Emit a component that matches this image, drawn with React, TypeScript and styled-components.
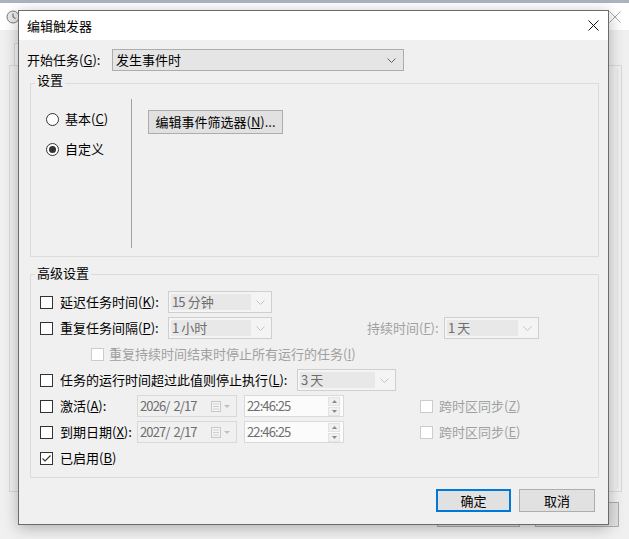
import styled, { createGlobalStyle } from 'styled-components';

const GlobalStyle = createGlobalStyle`
  html, body { margin: 0; padding: 0; }
  body {
    font-family: "Noto Sans CJK SC", "Noto Sans", sans-serif;
    font-size: 13px;
    color: #000;
    background: #f0f0f0;
  }
  * { box-sizing: border-box; }
`;

const Desktop = styled.div`
  position: relative;
  width: 629px;
  height: 539px;
  overflow: hidden;
  display: flex;
  flex-direction: column;
  background: #f0f0f0;
`;

const TopStrip = styled.div`
  height: 3px;
  background: #aab4be;
`;

const BackTitle = styled.div`
  height: 27px;
  background: #fff;
  display: flex;
  align-items: center;
  justify-content: space-between;
  padding: 0 8px 0 6px;
`;

const BackBody = styled.div`
  flex: 1;
  display: flex;
  flex-direction: column;
  padding: 13px 7px 0 9px;
`;

const BackTab = styled.div`
  width: 60px;
  height: 22px;
  margin-left: 5px;
  border: 1px solid #d9d9d9;
  border-bottom: none;
  background: #f7f7f7;
`;

const BackPanel = styled.div`
  height: 427px;
  border: 1px solid #d9d9d9;
  padding: 3px 3px 3px 0;
`;

const BackPanelInner = styled.div`
  height: 100%;
  border-right: 1px solid #e2e2e2;
`;

const BackButtons = styled.div`
  display: flex;
  justify-content: flex-end;
  gap: 15px;
  margin-top: 10px;
  padding-right: 3px;
`;

const BackButton = styled.div<{ $w: number }>`
  width: ${(p) => p.$w}px;
  height: 25px;
  background: #e1e1e1;
  border: 1px solid #adadad;
`;

const Dialog = styled.div`
  position: absolute;
  left: 18px;
  top: 10px;
  width: 591px;
  height: 515px;
  border: 1px solid #6b6b6b;
  background: #f0f0f0;
  box-shadow: 0 3px 14px rgba(0, 0, 0, 0.28);
  display: flex;
  flex-direction: column;
`;

const TitleBar = styled.div`
  height: 29px;
  background: #fff;
  display: flex;
  align-items: center;
  justify-content: space-between;
  padding-left: 8px;
  line-height: 16px;
`;

const CloseBtn = styled.div`
  width: 30px;
  height: 29px;
  display: flex;
  align-items: center;
  justify-content: center;
`;

const Body = styled.div`
  flex: 1;
  display: flex;
  flex-direction: column;
  padding: 9px 13px 0 8px;
  line-height: 16px;
`;

const StartRow = styled.div`
  display: flex;
  align-items: center;
  height: 22px;
`;

const StartLabel = styled.span`
  width: 85px;
`;

const Select = styled.div`
  width: 292px;
  height: 22px;
  background: #e5e5e5;
  border: 1px solid #adadad;
  display: flex;
  align-items: center;
  justify-content: space-between;
  padding: 0 7px 0 3px;
`;

const Group = styled.fieldset<{ $mt: number; $pt: number; $pb: number }>`
  margin: ${(p) => p.$mt}px 0 0 3px;
  width: 569px;
  min-width: 0;
  border: 1px solid #dcdcdc;
  padding: ${(p) => p.$pt}px 0 ${(p) => p.$pb}px 0;
`;

const Legend = styled.legend<{ $pb: number }>`
  margin-left: 4px;
  padding: 0 2px ${(p) => p.$pb}px;
  line-height: 16px;
`;

const SettingsInner = styled.div`
  display: flex;
  height: 149px;
`;

const RadioCol = styled.div`
  width: 101px;
  border-right: 1px solid #a0a0a0;
  display: flex;
  flex-direction: column;
  gap: 10px;
  padding: 10px 0 0 15px;
`;

const RadioRow = styled.label`
  display: flex;
  align-items: center;
  gap: 6px;
  height: 20px;
`;

const Radio = styled.span<{ $on?: boolean }>`
  width: 13px;
  height: 13px;
  border-radius: 50%;
  border: 1px solid #333;
  background: #fff;
  display: flex;
  align-items: center;
  justify-content: center;
  &::after {
    content: '';
    width: 7px;
    height: 7px;
    border-radius: 50%;
    background: ${(p) => (p.$on ? '#333' : 'transparent')};
  }
`;

const FilterCol = styled.div`
  padding: 11px 0 0 16px;
`;

const Button = styled.button<{ $w: number; $h: number; $def?: boolean }>`
  width: ${(p) => p.$w}px;
  height: ${(p) => p.$h}px;
  background: #e1e1e1;
  border: ${(p) => (p.$def ? '2px solid #0078d7' : '1px solid #adadad')};
  font: inherit;
  line-height: 16px;
  color: #000;
  padding: 0;
`;

const Rows = styled.div`
  display: flex;
  flex-direction: column;
  gap: 4px;
  padding-left: 9px;
`;

const Row = styled.div<{ $indent?: number }>`
  display: flex;
  align-items: center;
  height: 22px;
  padding-left: ${(p) => p.$indent ?? 0}px;
`;

const Check = styled.span<{ $disabled?: boolean; $gap?: number }>`
  width: 13px;
  height: 13px;
  flex: none;
  border: 1px solid ${(p) => (p.$disabled ? '#cccccc' : '#333')};
  background: #fff;
  margin-right: ${(p) => p.$gap ?? 7}px;
  display: flex;
  align-items: center;
  justify-content: center;
`;

const Label = styled.span<{ $w?: number; $ml?: number; $dim?: boolean }>`
  ${(p) => (p.$w ? `width: ${p.$w}px; flex: none;` : '')}
  margin-left: ${(p) => p.$ml ?? 0}px;
  color: ${(p) => (p.$dim ? '#a0a0a0' : '#000')};
  white-space: nowrap;
`;

const Num = styled.span`
  letter-spacing: -0.9px;
  white-space: pre;
`;

const Combo = styled.div<{ $w: number }>`
  width: ${(p) => p.$w}px;
  height: 22px;
  border: 1px solid #cfcfcf;
  background: #f4f4f4;
  padding: 2px;
  display: flex;
  align-items: stretch;
`;

const ComboText = styled.span`
  flex: 1;
  background: #e8e8e8;
  color: #6d6d6d;
  padding-left: 1px;
  display: flex;
  align-items: center;
  gap: 3px;
`;

const ComboArrow = styled.span`
  width: 18px;
  display: flex;
  align-items: center;
  justify-content: center;
`;

const DateBox = styled.div`
  width: 100px;
  height: 22px;
  border: 1px solid #d9d9d9;
  background: #f0f0f0;
  color: #6d6d6d;
  display: flex;
  align-items: center;
  padding-left: 2px;
  margin-right: 7px;
`;

const DateIcon = styled.span`
  margin-left: auto;
  display: flex;
  align-items: center;
  gap: 3px;
  padding-right: 6px;
`;

const TimeBox = styled.div`
  width: 100px;
  height: 22px;
  border: 1px solid #d9d9d9;
  background: #fbfbfb;
  color: #6d6d6d;
  display: flex;
  align-items: center;
  padding: 0 3px 0 2px;
  margin-right: 76px;
`;

const Spin = styled.span`
  margin-left: auto;
  width: 12px;
  height: 19px;
  display: flex;
  flex-direction: column;
  gap: 1px;
`;

const SpinHalf = styled.span`
  flex: 1;
  background: #f0f0f0;
  border: 1px solid #e3e3e3;
  display: flex;
  align-items: center;
  justify-content: center;
`;

const Footer = styled.div`
  display: flex;
  justify-content: flex-end;
  gap: 8px;
  margin-top: 11px;
`;

const Mn = styled.u`
  text-underline-offset: 1px;
`;

const Chevron = ({ color = '#606060' }: { color?: string }) => (
  <svg width="9" height="5" viewBox="0 0 9 5">
    <polyline points="0.5,0.5 4.5,4.5 8.5,0.5" fill="none" stroke={color} strokeWidth="1" />
  </svg>
);

const Tick = () => (
  <svg width="11" height="11" viewBox="0 0 11 11">
    <polyline points="1.5,5.5 4,8 9.5,2.5" fill="none" stroke="#333" strokeWidth="1.1" />
  </svg>
);

const Triangle = ({ up }: { up?: boolean }) => (
  <svg width="5" height="3" viewBox="0 0 5 3">
    <polygon points={up ? '0,3 2.5,0 5,3' : '0,0 2.5,3 5,0'} fill="#8a8a8a" />
  </svg>
);

const ComboBox = ({ w, num, unit }: { w: number; num: string; unit: string }) => (
  <Combo $w={w}>
    <ComboText>
      <Num>{num}</Num>
      <span>{unit}</span>
    </ComboText>
    <ComboArrow>
      <Chevron color="#c4c4c4" />
    </ComboArrow>
  </Combo>
);

const DateField = ({ value }: { value: string }) => (
  <DateBox>
    <Num>{value}</Num>
    <DateIcon>
      <svg width="10" height="11" viewBox="0 0 10 11">
        <rect x="0.5" y="0.5" width="9" height="10" fill="#f4f4f4" stroke="#c8c8c8" />
        <line x1="2" y1="3" x2="8" y2="3" stroke="#d0d0d0" />
        <line x1="2" y1="5.5" x2="8" y2="5.5" stroke="#d0d0d0" />
        <line x1="2" y1="8" x2="8" y2="8" stroke="#d0d0d0" />
      </svg>
      <svg width="6" height="3" viewBox="0 0 6 3">
        <polygon points="0,0 3,3 6,0" fill="#c0c0c0" />
      </svg>
    </DateIcon>
  </DateBox>
);

const TimeField = ({ value }: { value: string }) => (
  <TimeBox>
    <Num>{value}</Num>
    <Spin>
      <SpinHalf>
        <Triangle up />
      </SpinHalf>
      <SpinHalf>
        <Triangle />
      </SpinHalf>
    </Spin>
  </TimeBox>
);

export default function App() {
  return (
    <Desktop>
      <GlobalStyle />
      <TopStrip />
      <BackTitle>
        <svg width="14" height="14" viewBox="0 0 14 14">
          <circle cx="7" cy="7" r="6" fill="#e8e8e8" stroke="#7a7a7a" />
          <polyline points="7,3.5 7,7 9.5,8.5" fill="none" stroke="#5a5a5a" />
        </svg>
        <svg width="12" height="12" viewBox="0 0 12 12">
          <path d="M0.5 0.5 L11.5 11.5 M11.5 0.5 L0.5 11.5" stroke="#a8a8a8" strokeWidth="1" />
        </svg>
      </BackTitle>
      <BackBody>
        <BackTab />
        <BackPanel>
          <BackPanelInner />
        </BackPanel>
        <BackButtons>
          <BackButton $w={83} />
          <BackButton $w={84} />
        </BackButtons>
      </BackBody>

      <Dialog>
        <TitleBar>
          <span>编辑触发器</span>
          <CloseBtn>
            <svg width="11" height="11" viewBox="0 0 11 11">
              <path d="M0.5 0.5 L10.5 10.5 M10.5 0.5 L0.5 10.5" stroke="#111" strokeWidth="1" />
            </svg>
          </CloseBtn>
        </TitleBar>
        <Body>
          <StartRow>
            <StartLabel>
              开始任务(<Mn>G</Mn>):
            </StartLabel>
            <Select>
              <span>发生事件时</span>
              <Chevron />
            </Select>
          </StartRow>

          <Group $mt={1} $pt={5} $pb={8}>
            <Legend $pb={6}>设置</Legend>
            <SettingsInner>
              <RadioCol>
                <RadioRow>
                  <Radio />
                  <span>
                    基本(<Mn>C</Mn>)
                  </span>
                </RadioRow>
                <RadioRow>
                  <Radio $on />
                  <span>自定义</span>
                </RadioRow>
              </RadioCol>
              <FilterCol>
                <Button $w={135} $h={24}>
                  编辑事件筛选器(<Mn>N</Mn>)...
                </Button>
              </FilterCol>
            </SettingsInner>
          </Group>

          <Group $mt={8} $pt={8} $pb={8}>
            <Legend $pb={2}>高级设置</Legend>
            <Rows>
              <Row>
                <Check />
                <Label $w={108}>
                  延迟任务时间(<Mn>K</Mn>):
                </Label>
                <ComboBox w={104} num="15" unit="分钟" />
              </Row>
              <Row>
                <Check />
                <Label $w={108}>
                  重复任务间隔(<Mn>P</Mn>):
                </Label>
                <ComboBox w={104} num="1" unit="小时" />
                <Label $w={77} $ml={95} $dim>
                  持续时间(<Mn>F</Mn>):
                </Label>
                <ComboBox w={95} num="1" unit="天" />
              </Row>
              <Row $indent={51}>
                <Check $disabled $gap={5} />
                <Label $dim>
                  重复持续时间结束时停止所有运行的任务(<Mn>I</Mn>)
                </Label>
              </Row>
              <Row>
                <Check />
                <Label $w={237}>
                  任务的运行时间超过此值则停止执行(<Mn>L</Mn>):
                </Label>
                <ComboBox w={99} num="3" unit="天" />
              </Row>
              <Row>
                <Check />
                <Label $w={77}>
                  激活(<Mn>A</Mn>):
                </Label>
                <DateField value="2026/  2/17" />
                <TimeField value="22:46:25" />
                <Check $disabled $gap={6} />
                <Label $dim>
                  跨时区同步(<Mn>Z</Mn>)
                </Label>
              </Row>
              <Row>
                <Check />
                <Label $w={77}>
                  到期日期(<Mn>X</Mn>):
                </Label>
                <DateField value="2027/  2/17" />
                <TimeField value="22:46:25" />
                <Check $disabled $gap={6} />
                <Label $dim>
                  跨时区同步(<Mn>E</Mn>)
                </Label>
              </Row>
              <Row>
                <Check>
                  <Tick />
                </Check>
                <Label>
                  已启用(<Mn>B</Mn>)
                </Label>
              </Row>
            </Rows>
          </Group>

          <Footer>
            <Button $w={75} $h={23} $def>
              确定
            </Button>
            <Button $w={76} $h={23}>
              取消
            </Button>
          </Footer>
        </Body>
      </Dialog>
    </Desktop>
  );
}
